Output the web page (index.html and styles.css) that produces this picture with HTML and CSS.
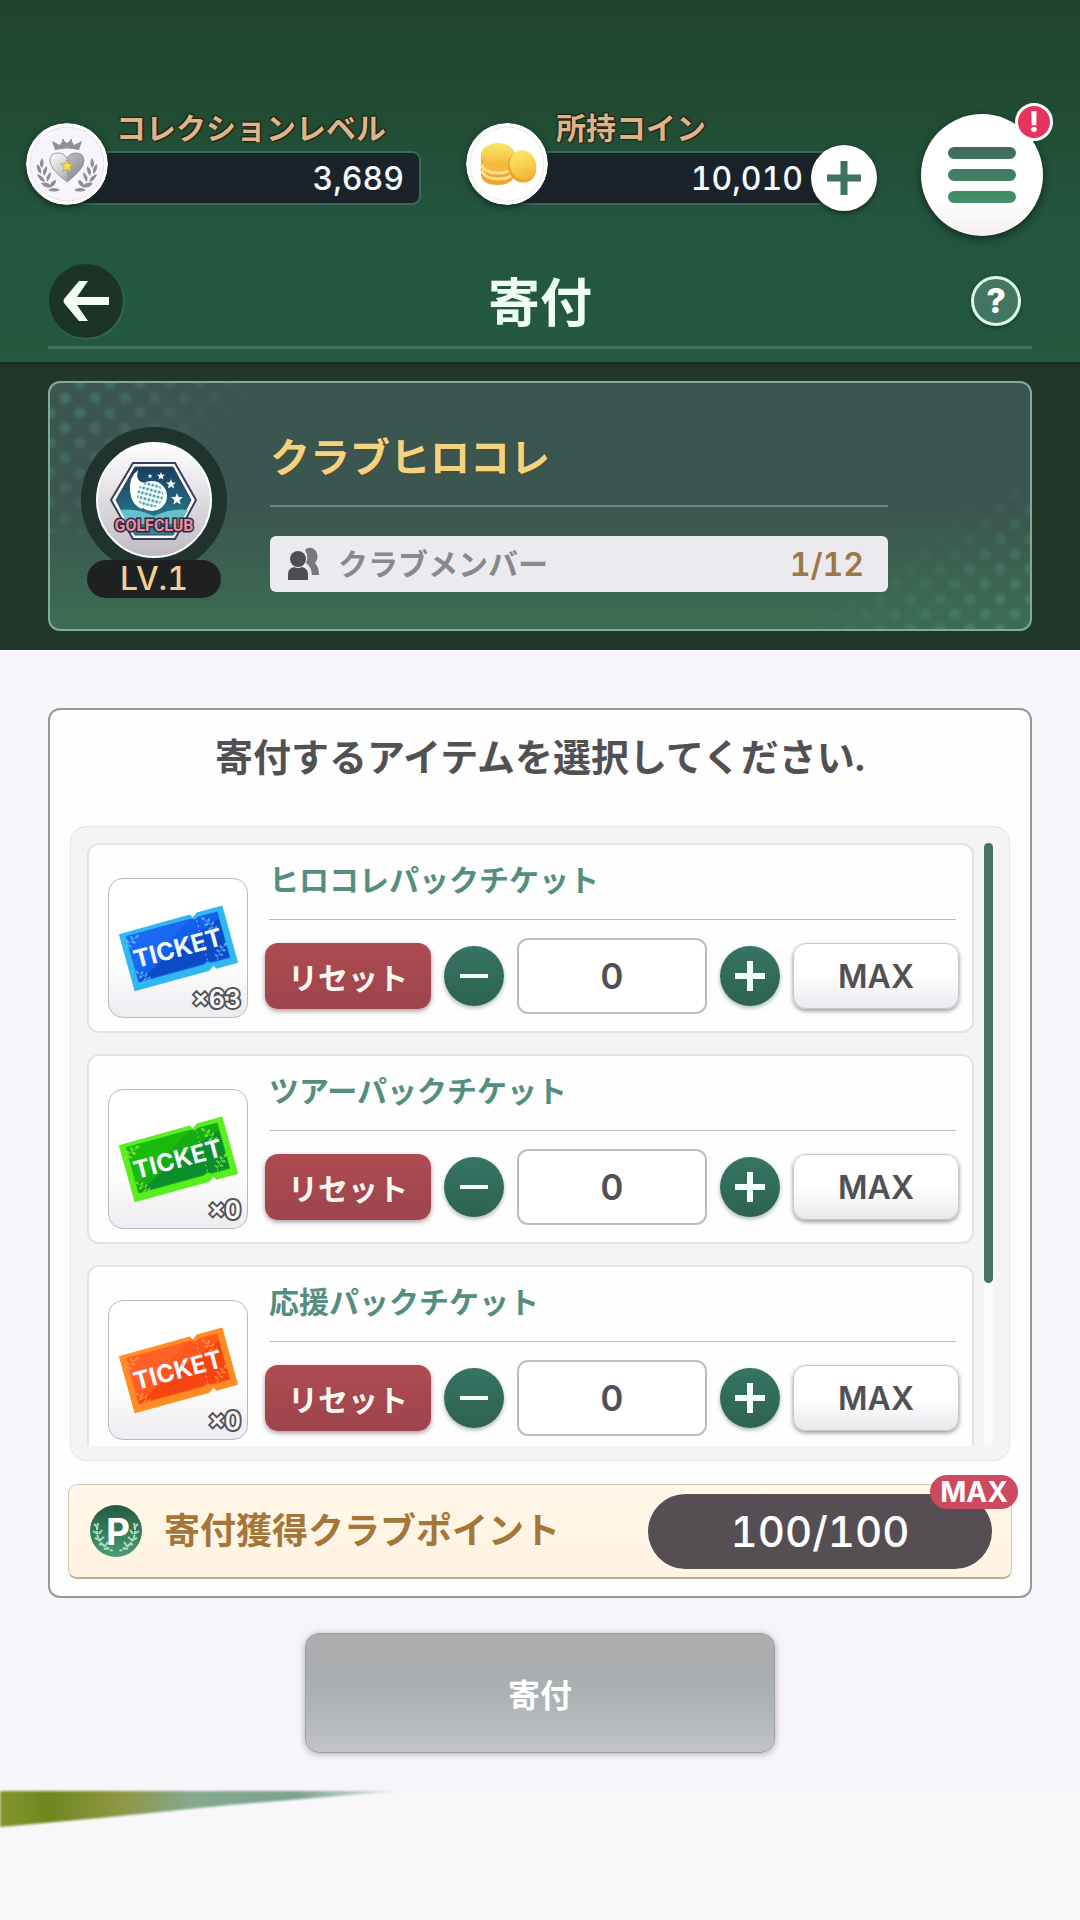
FILE: index.html
```html
<!DOCTYPE html>
<html lang="ja">
<head>
<meta charset="utf-8">
<meta name="viewport" content="width=device-width, initial-scale=1">
<title>寄付</title>
<link rel="stylesheet" href="styles.css">
</head>
<body>
<svg class="defs" aria-hidden="true">
  <defs>
    <path id="star" d="M0-5 1.3-1.6 5-1.5 2.1.8 3.1 4.5 0 2.4-3.1 4.5-2.1.8-5-1.5-1.3-1.6Z"/>
    <g id="sprig">
      <path d="M2 22Q3 12 14 3" fill="none" stroke="currentColor"/>
      <path d="M13 4q-1-5 4-5 1 4-4 5M10 7q-5-1-3-5 4 1 3 5M9 9q2 4 6 1-2-4-6-1M6 12q-5-1-4-5 4 1 4 5M5 14q2 4 6 2-2-4-6-2M3 18q-4-1-4-5 4 1 4 5" fill="currentColor"/>
    </g>
    <clipPath id="ticket-face"><path d="m13 58 70-20 4 1 4-3 22-6 15 51-21 6-4-1-4 3-71 20Z"/></clipPath>
    <g id="ticket">
      <path d="m10 56 72-20 3 3 4-5 26-7 16 58-22 6-3-3-4 5-76 21Z" fill="var(--rim)"/>
      <path d="m17 58 66-18 4 1 4-3 19-5 13 47-19 5-4-1-4 3-66 18Z" fill="var(--face)"/>
      <path d="m17 58 66-18-16 16-40 40Z" fill="var(--light)" opacity=".35"/>
      <path d="M30 104 65 73 84 60 111 40l11 39-19 5-4-1-4 3Z" fill="var(--shade)" opacity=".55"/>
      <path d="m89 42 11 41" stroke="#fff" stroke-opacity=".5" stroke-dasharray="2 3"/>
      <g color="var(--leaf)" clip-path="url(#ticket-face)" opacity=".75">
        <use href="#sprig" transform="translate(17 55) rotate(10) scale(.8)"/>
        <use href="#sprig" transform="translate(38 90) scale(-.7 .7) rotate(20)"/>
        <use href="#sprig" transform="translate(107 37) scale(-.8 .8) rotate(10)"/>
        <use href="#sprig" transform="translate(107 66) rotate(-5) scale(.75)"/>
      </g>
      <text x="70" y="79" transform="rotate(-15 70 71)" text-anchor="middle" class="ticket-word">TICKET</text>
    </g>
    <linearGradient id="silver" x2="1" y2="1"><stop offset="0" stop-color="#fff"/><stop offset=".5" stop-color="#c9c9d0"/><stop offset="1" stop-color="#77777f"/></linearGradient>
    <linearGradient id="gold" x2="0" y2="1"><stop offset="0" stop-color="#fbe96a"/><stop offset="1" stop-color="#f5b433"/></linearGradient>
    <linearGradient id="night" x2="0" y2="1"><stop offset="0" stop-color="#163f5e"/><stop offset="1" stop-color="#2f8799"/></linearGradient>
    <linearGradient id="bars" x2="0" y2="1"><stop offset="0" stop-color="#42695a"/><stop offset="1" stop-color="#43916b"/></linearGradient>
    <linearGradient id="pgreen" x2="0" y2="1"><stop offset="0" stop-color="#225a3d"/><stop offset="1" stop-color="#4c9c77"/></linearGradient>
    <linearGradient id="grass"><stop offset="0" stop-color="#84962b"/><stop offset=".12" stop-color="#6f8720"/><stop offset=".3" stop-color="#8e9641"/><stop offset=".48" stop-color="#86a98e"/><stop offset=".75" stop-color="#7ba38f"/><stop offset="1" stop-color="#a9bcae" stop-opacity=".3"/></linearGradient>
  </defs>
</svg>

<header class="header">
  <div class="topbar">
    <section class="stat">
      <svg class="medal" viewBox="0 0 82 82" aria-hidden="true">
        <circle cx="41" cy="41" r="41" fill="#fff"/><circle cx="41" cy="41" r="37" fill="#f8f4fb" stroke="#e5e0ea"/>
        <path d="M26 18l8 4 3-5 4 3 4-3 3 5 8-4-3 9q-12-3-24 0Z" fill="#8f8f98"/>
        <circle cx="37" cy="17" r="1" fill="#888"/><circle cx="45" cy="17" r="1" fill="#888"/>
        <path d="M41 59Q24 46 24 38q0-8 8-8 6 0 9 5 3-5 9-5 8 0 8 8 0 8-17 21Z" fill="url(#silver)" stroke="#9a9aa3"/>
        <path d="M41 35v24q17-13 17-21 0-8-8-8-6 0-9 5Z" fill="#85858f" opacity=".45"/>
        <use href="#star" transform="translate(41 43) scale(1.3)" fill="#f1df59" stroke="#b7a33b" stroke-width=".6"/>
        <g fill="#8d8d98"><path d="M16 35q-4 6 0 10 3-5 0-10M11 41q-1 7 4 10 1-7-4-10M21 43q-6 4-3 10 4-5 3-10M11 51q2 7 8 8-1-6-8-8M25 49q-6 4-4 10 4-4 4-10M15 60q4 6 11 4-4-6-11-4M30 57q-6 1-6 7 6-1 6-7M22 67q6-4 12 0-6 3-12 0"/>
        <path d="M66 35q4 6 0 10-3-5 0-10M71 41q1 7-4 10-1-7 4-10M61 43q6 4 3 10-4-5-3-10M71 51q-2 7-8 8 1-6 8-8M57 49q6 4 4 10-4-4-4-10M67 60q-4 6-11 4 4-6 11-4M52 57q6 1 6 7-6-1-6-7M60 67q-6-4-12 0 6 3 12 0"/></g>
      </svg>
      <div class="stat-body">
        <h2 class="stat-label">コレクションレベル</h2>
        <p class="stat-bar"><span class="stat-value">3,689</span></p>
      </div>
    </section>
    <section class="stat">
      <svg class="medal" viewBox="0 0 82 82" aria-hidden="true">
        <circle cx="41" cy="41" r="41" fill="#fff"/><circle cx="41" cy="41" r="37" fill="#fff" stroke="#e9e6ea"/>
        <path d="M15 34v18q1 10 17 10 12 0 16-8V34Z" fill="#f0a634"/>
        <path d="M15 41q3 9 17 9 12 0 16-7M15 47q4 9 17 9 12 0 16-6" fill="none" stroke="#fbe28a" stroke-width="3"/>
        <ellipse cx="32" cy="32" rx="17" ry="12" fill="url(#gold)"/><path d="M17 34q5 11 17 10 10-1 14-8v5q-6 8-17 7-11 0-14-7Z" fill="#f6bb3c"/>
        <ellipse cx="56" cy="44" rx="14" ry="16" transform="rotate(-20 56 44)" fill="#f0a42e"/><ellipse cx="57" cy="42" rx="13" ry="15" transform="rotate(-20 57 42)" fill="url(#gold)"/>
      </svg>
      <div class="stat-body">
        <h2 class="stat-label">所持コイン</h2>
        <p class="stat-bar stat-bar-add"><span class="stat-value">10,010</span>
          <button class="add-coin" type="button" aria-label="コインを追加"><svg viewBox="0 0 34 34" width="34" height="34"><path d="M17 0v34M0 17h34" stroke="#3c7461" stroke-width="7"/></svg></button></p>
      </div>
    </section>
    <button class="menu" type="button" aria-label="メニュー">
      <svg viewBox="0 0 68 56" width="68" height="56" aria-hidden="true"><path d="M6 0H62a6 6 0 0 1 0 12H6A6 6 0 0 1 6 0ZM6 22H62a6 6 0 0 1 0 12H6A6 6 0 0 1 6 22ZM6 44H62a6 6 0 0 1 0 12H6A6 6 0 0 1 6 44Z" fill="url(#bars)"/></svg>
      <span class="alert">!</span>
    </button>
  </div>
  <div class="titlebar">
    <button class="back" type="button" aria-label="戻る"><svg viewBox="0 0 46 40" width="46" height="40"><path d="M46 16v8H14l11 16h-9L1 22q-1-2 0-4L16 0h9L14 16Z" fill="#f4fff8"/></svg></button>
    <h1 class="title">寄付</h1>
    <button class="help" type="button" aria-label="ヘルプ">?</button>
  </div>
</header>

<section class="club">
  <div class="club-card">
    <div class="crest">
      <svg class="crest-ball" viewBox="0 0 116 116" aria-hidden="true">
        <defs><linearGradient id="ball" x2="0" y2="1"><stop offset="0" stop-color="#fff"/><stop offset="1" stop-color="#bfbac2"/></linearGradient>
        <pattern id="dimple" width="4" height="5" patternUnits="userSpaceOnUse" patternTransform="rotate(15)"><circle cx="2" cy="2" r="1.5" fill="#3b9aab"/></pattern></defs>
        <circle cx="58" cy="58" r="57" fill="url(#ball)" stroke="#fff" stroke-width="2"/>
        <path d="M37 21H79L100 58 79 97H37L15 58Z" fill="#fff" stroke="#34405c" stroke-width="2"/>
        <path d="M39 25H77L95 58 77 93H39L20 58Z" fill="url(#night)" stroke="#34405c"/>
        <path d="M24 68q16-2 34 6 18-8 34-6l-8 14H32Z" fill="#63c0cc"/>
        <path d="M42 28q-9 7-8 20 1 15 12 19L56 40q-18 4-14-12Z" fill="#fff"/>
        <circle cx="56" cy="54" r="15" fill="#fff"/><circle cx="54" cy="53" r="13" fill="url(#dimple)"/>
        <g fill="#fff"><use href="#star" transform="translate(54 34) scale(.5)"/><use href="#star" transform="translate(65 34) scale(.8)"/><use href="#star" transform="translate(75 42)"/><use href="#star" transform="translate(81 57) scale(1.2)"/></g>
        <text x="58" y="89" text-anchor="middle" class="crest-word">GOLFCLUB</text>
      </svg>
      <span class="level">LV.1</span>
    </div>
    <div class="club-info">
      <h2 class="club-name">クラブヒロコレ</h2>
      <p class="members">
        <svg viewBox="0 0 32 34" width="32" height="34" aria-hidden="true"><path d="M17 3a7 8 0 1 1 10 13q4 4 4 12h-7q-1-9-6-12 3-6-1-13Z" fill="#7b787d"/><circle cx="10" cy="12" r="8" fill="#504d52"/><path d="M0 33v-5q0-7 6-8 4 2 8 0 6 1 6 8v5Z" fill="#504d52"/></svg>
        <span class="members-label">クラブメンバー</span><span class="members-count">1/12</span>
      </p>
    </div>
  </div>
</section>

<main class="page">
  <form class="panel" id="donation">
    <h2 class="panel-title">寄付するアイテムを選択してください.</h2>
    <div class="list">
      <ul class="items">
        <li class="item">
          <div class="thumb blue"><svg viewBox="0 0 140 140" aria-hidden="true"><use href="#ticket"/></svg><span class="count">×63</span></div>
          <div class="item-body">
            <label class="item-name" for="qty1">ヒロコレパックチケット</label>
            <div class="controls">
              <button class="btn reset" type="button">リセット</button>
              <button class="step" type="button" aria-label="減らす"><svg viewBox="0 0 30 30"><path d="M1 15h28" stroke-width="4"/></svg></button>
              <input class="qty" id="qty1" type="text" inputmode="numeric" value="0">
              <button class="step" type="button" aria-label="増やす"><svg viewBox="0 0 30 30"><path d="M15 0v30M0 15h30" stroke-width="6"/></svg></button>
              <button class="btn max" type="button">MAX</button>
            </div>
          </div>
        </li>
        <li class="item">
          <div class="thumb green"><svg viewBox="0 0 140 140" aria-hidden="true"><use href="#ticket"/></svg><span class="count">×0</span></div>
          <div class="item-body">
            <label class="item-name" for="qty2">ツアーパックチケット</label>
            <div class="controls">
              <button class="btn reset" type="button">リセット</button>
              <button class="step" type="button" aria-label="減らす"><svg viewBox="0 0 30 30"><path d="M1 15h28" stroke-width="4"/></svg></button>
              <input class="qty" id="qty2" type="text" inputmode="numeric" value="0">
              <button class="step" type="button" aria-label="増やす"><svg viewBox="0 0 30 30"><path d="M15 0v30M0 15h30" stroke-width="6"/></svg></button>
              <button class="btn max" type="button">MAX</button>
            </div>
          </div>
        </li>
        <li class="item">
          <div class="thumb orange"><svg viewBox="0 0 140 140" aria-hidden="true"><use href="#ticket"/></svg><span class="count">×0</span></div>
          <div class="item-body">
            <label class="item-name" for="qty3">応援パックチケット</label>
            <div class="controls">
              <button class="btn reset" type="button">リセット</button>
              <button class="step" type="button" aria-label="減らす"><svg viewBox="0 0 30 30"><path d="M1 15h28" stroke-width="4"/></svg></button>
              <input class="qty" id="qty3" type="text" inputmode="numeric" value="0">
              <button class="step" type="button" aria-label="増やす"><svg viewBox="0 0 30 30"><path d="M15 0v30M0 15h30" stroke-width="6"/></svg></button>
              <button class="btn max" type="button">MAX</button>
            </div>
          </div>
        </li>
      </ul>
      <div class="scrollbar" aria-hidden="true"><div class="scroll-thumb"></div></div>
    </div>
    <div class="points">
      <svg viewBox="0 0 52 52" width="52" height="52" aria-hidden="true"><circle cx="26" cy="26" r="26" fill="url(#pgreen)"/>
        <g fill="none" stroke="#a9dcc0" stroke-width="2"><path d="M8 18Q3 38 23 46M44 18q5 20-15 28" stroke-dasharray="3 1"/><path d="M4 19l4 4M3 26l5 3M5 33l5 2M9 39l5 1M14 44l5-1M12 25l-3 4M14 32l-4 3M18 37l-3 4M48 19l-4 4M49 26l-5 3M47 33l-5 2M43 39l-5 1M38 44l-5-1M40 25l3 4M38 32l4 3M34 37l3 4"/></g>
        <text x="28" y="40" text-anchor="middle" class="p-mark">P</text></svg>
      <span class="points-label">寄付獲得クラブポイント</span>
      <span class="points-value">100/100<span class="max-badge">MAX</span></span>
    </div>
  </form>
  <button class="donate" type="submit" form="donation" disabled>寄付</button>
</main>
<svg class="grass" viewBox="0 0 400 40" aria-hidden="true"><path d="M0 0H400L230 14 100 27 0 36Z" fill="url(#grass)"/></svg>
</body>
</html>
```
FILE: styles.css
```css
* { box-sizing: border-box; }

body {
  margin: 0;
  min-height: 100vh;
  background: #f8f7fa;
  color: #535054;
  font-family: "Inter", "Noto Sans CJK JP", sans-serif;
  font-weight: 600;
  font-variant-numeric: tabular-nums;
}

h1, h2, p, ul { margin: 0; padding: 0; }
button, input { font: inherit; font-variant-numeric: tabular-nums; padding: 0; border: 0; }
svg { display: block; flex: none; }
.defs { position: absolute; width: 0; height: 0; }

/* Header */
.header {
  padding: 110px 48px 13px;
  background: linear-gradient(#20452f 0, #21492f 80px, #235540 220px, #24593f 100%);
}
.topbar {
  display: grid;
  grid-template-columns: 393fr 412fr 122px;
  gap: 46px;
  align-items: start;
  margin: 0 -11px 0 -22px;
}
.stat { display: flex; align-items: flex-end; }
.medal {
  width: 82px;
  height: 82px;
  z-index: 1;
  border-radius: 50%;
  box-shadow: 0 2px 6px #12291c;
}
.stat-body { flex: 1; margin-left: -32px; }
.stat:first-child { margin-right: -3px; }
.stat:nth-child(2) { margin-left: 2px; margin-right: -2px; }
.stat-label {
  padding: 0 0 5px 40px;
  font-size: 30px;
  font-weight: 700;
  line-height: 36px;
  color: #dab68c;
  white-space: nowrap;
  text-shadow: 1px 1px 1px #2c1c0c, -1px -1px 1px #2c1c0c, 1px -1px 1px #2c1c0c;
}
.stat-bar {
  display: flex;
  align-items: center;
  justify-content: flex-end;
  height: 54px;
  padding-right: 15px;
  border: 2px solid #3f6858;
  border-radius: 9px;
  background: #1a2329;
}
.stat-bar-add { margin-right: 32px; padding: 0; }
.stat-value { font-size: 32px; font-weight: 500; color: #f5faff; }
.add-coin {
  display: grid;
  place-items: center;
  flex: none;
  width: 66px;
  height: 66px;
  margin: 0 -34px 0 8px;
  border-radius: 50%;
  background: #fff;
  box-shadow: 0 2px 5px #12291c;
}
.menu {
  position: relative;
  display: grid;
  place-items: center;
  width: 122px;
  height: 122px;
  margin-top: 4px;
  border-radius: 50%;
  background: linear-gradient(#fff 70%, #f2eff3);
  box-shadow: 0 3px 8px #12291c;
}
.alert {
  position: absolute;
  top: -11px;
  right: -10px;
  width: 38px;
  height: 38px;
  border: 3px solid #fff;
  border-radius: 50%;
  background: #e5355f;
  color: #fff;
  font-size: 28px;
  font-weight: 800;
  line-height: 32px;
}
.titlebar {
  display: grid;
  grid-template-columns: 1fr auto 1fr;
  align-items: center;
  padding: 28px 0 8px;
  border-bottom: 3px solid #41705f;
}
.back {
  display: grid;
  place-items: center;
  width: 74px;
  height: 74px;
  margin-left: 1px;
  border-radius: 50%;
  background: #1c3328;
  box-shadow: 1px 1px 2px #3d7059;
}
.title {
  padding-top: 6px;
  font-size: 52px;
  font-weight: 700;
  line-height: 64px;
  color: #f0fff6;
}
.help {
  justify-self: end;
  width: 50px;
  height: 50px;
  margin-right: 11px;
  border: 3px solid #dcfbec;
  border-radius: 50%;
  background: #437662;
  color: #fff;
  font-size: 34px;
  font-weight: 800;
  line-height: 44px;
  box-shadow: 0 2px 4px #183b2a;
}

/* Club card */
.club {
  padding: 19px 48px;
  background: linear-gradient(#162e23 0, #22362a 8px, #20382b 100%);
}
.club-card {
  position: relative;
  display: grid;
  grid-template-columns: 146px 618px;
  gap: 43px;
  padding: 29px 31px 37px;
  border: 2px solid #83aa97;
  border-radius: 12px;
  overflow: hidden;
  background: linear-gradient(#3b5550 50%, #3b6b53 95%);
}
.club-card::before,
.club-card::after {
  content: "";
  position: absolute;
  width: 300px;
  height: 150px;
  background:
    radial-gradient(circle, #4d8a75 3px, transparent 8px) 0 0 / 30px 30px,
    radial-gradient(circle, #4d8a75 3px, transparent 8px) 15px 15px / 30px 30px;
}
.club-card::before {
  top: 0;
  left: 0;
  opacity: .5;
  mask-image: linear-gradient(135deg, #000 10%, transparent 50%);
}
.club-card::after {
  right: 0;
  bottom: 0;
  opacity: .6;
  mask-image: linear-gradient(325deg, #000 10%, transparent 48%);
}
.crest {
  position: relative;
  z-index: 1;
  display: grid;
  place-items: center;
  width: 146px;
  height: 146px;
  margin-top: 15px;
  border-radius: 50%;
  background: #20332e;
}
.crest-ball { width: 116px; height: 116px; }
.crest-word {
  font: 700 16px "Roboto", sans-serif;
  fill: #e7909d;
  stroke: #2d2947;
  stroke-width: 3px;
  paint-order: stroke;
}
.level {
  position: absolute;
  left: 6px;
  bottom: -25px;
  width: 134px;
  height: 38px;
  border-radius: 19px;
  background: #1f2022;
  color: #f0cf8f;
  font-size: 32px;
  font-weight: 500;
  line-height: 38px;
  text-align: center;
}
.club-info { position: relative; z-index: 1; }
.club-name {
  height: 95px;
  padding-top: 18px;
  border-bottom: 2px solid #6c8780;
  color: #f3d382;
  font-size: 40px;
  font-weight: 700;
  line-height: 56px;
  text-shadow: 0 1px 2px #5c4a20;
}
.members {
  display: flex;
  align-items: center;
  gap: 18px;
  height: 56px;
  margin-top: 29px;
  padding: 0 24px 0 18px;
  border-radius: 6px;
  background: #ebeaee;
}
.members-label { font-size: 30px; font-weight: 700; line-height: 36px; color: #8a888c; }
.members-count { margin-left: auto; font-size: 32px; color: #9b7848; }

/* Donation panel */
.page { padding: 58px 48px 38px; background: #f7f5f9; }
.panel {
  padding: 20px 18px 17px;
  border: 2px solid #98969b;
  border-radius: 12px;
  background: #fefeff;
}
.panel-title {
  margin-bottom: 40px;
  padding-bottom: 2px;
  font-size: 38px;
  font-weight: 700;
  line-height: 54px;
  text-align: center;
}
.list {
  display: flex;
  gap: 10px;
  margin: 0 2px;
  padding: 16px 16px 14px;
  border: 1px solid #e6e4e8;
  border-radius: 16px;
  background: #f4f3f6;
}
.items {
  flex: 1;
  display: flex;
  flex-direction: column;
  gap: 21px;
  max-height: 603px;
  overflow: hidden;
  list-style: none;
}
.item {
  display: flex;
  flex: none;
  gap: 17px;
  height: 190px;
  padding: 0 13px 0 19px;
  border: 2px solid #e4e2e6;
  border-radius: 12px;
  background: #fefeff;
}
.thumb {
  position: relative;
  flex: none;
  width: 140px;
  height: 140px;
  margin-top: 33px;
  border: 1px solid #b9b7bc;
  border-radius: 15px;
  background: linear-gradient(#fff 60%, #ececf1);
}
.ticket-word { font: 700 25px "Inter", sans-serif; fill: #f4f9ff; }
.blue { --rim: #31b8f3; --face: #1460ee; --light: #2677ff; --shade: #0738aa; --leaf: #64c7f8; }
.green { --rim: #59ee20; --face: #16ad13; --light: #24d606; --shade: #087443; --leaf: #8bf342; }
.orange { --rim: #ff8c24; --face: #ff571d; --light: #ff7440; --shade: #ee3708; --leaf: #ffa044; }
.count {
  position: absolute;
  right: 6px;
  bottom: 4px;
  font-size: 25px;
  line-height: 28px;
  color: #fff;
  -webkit-text-stroke: 4px #555357;
  paint-order: stroke;
}
.item-body { flex: 1; }
.item-name {
  display: block;
  margin: 0 3px 0 4px;
  height: 75px;
  padding-top: 14px;
  border-bottom: 1px solid #bcbabf;
  color: #548e7f;
  font-size: 30px;
  font-weight: 700;
  line-height: 42px;
}
.controls {
  display: flex;
  align-items: center;
  justify-content: space-between;
  height: 76px;
  margin-top: 18px;
}
.btn {
  width: 166px;
  height: 66px;
  border-radius: 13px;
  font-size: 32px;
}
.reset {
  background: linear-gradient(#ae4b51, #9d444c);
  color: #fff8f2;
  font-size: 30px;
  font-weight: 700;
  box-shadow: 0 2px 5px #a99;
}
.max {
  border: 1px solid #c9c6cb;
  background: linear-gradient(#fff 50%, #ebe8ed);
  color: #535054;
  box-shadow: 0 2px 4px #99969b;
}
.step {
  display: grid;
  place-items: center;
  width: 60px;
  height: 60px;
  border-radius: 50%;
  background: linear-gradient(#367463, #2e6252);
  box-shadow: 0 2px 4px #aab5b0;
}
.step svg { width: 30px; height: 30px; stroke: #f4fffa; }
.qty {
  width: 190px;
  height: 76px;
  border: 2px solid #bebcc0;
  border-radius: 11px;
  background: #fff;
  color: #535054;
  font-size: 36px;
  text-align: center;
}
.scrollbar { width: 9px; border-radius: 5px; background: #fbfafc; }
.scroll-thumb { height: 73%; border-radius: 5px; background: #45735f; }

.points {
  display: flex;
  align-items: center;
  gap: 22px;
  height: 95px;
  margin-top: 23px;
  padding: 0 19px 0 21px;
  border: 1px solid #cfc8bd;
  border-bottom: 2px solid #b8aa98;
  border-radius: 9px;
  background: linear-gradient(#fff7e8, #fff3e2);
}
.p-mark { font: 700 37px "Inter", sans-serif; fill: #fff; }
.points-label { font-size: 36px; font-weight: 700; line-height: 42px; color: #a57638; }
.points-value {
  position: relative;
  width: 344px;
  height: 75px;
  margin-left: auto;
  border-radius: 38px;
  background: #554f53;
  color: #fff;
  font-size: 42px;
  font-weight: 500;
  line-height: 75px;
  text-align: center;
}
.max-badge {
  position: absolute;
  top: -19px;
  right: -26px;
  width: 88px;
  height: 34px;
  border-radius: 17px;
  background: #cb4a60;
  font-size: 28px;
  font-weight: 700;
  line-height: 34px;
}
.donate {
  display: block;
  width: 470px;
  height: 120px;
  margin: 35px auto 0;
  border: 1px solid #9da0a2;
  border-radius: 14px;
  background: linear-gradient(#adabae, #aab0b2 50%, #c2c3c5);
  color: #fff;
  font-size: 32px;
  font-weight: 700;
  box-shadow: 0 1px 6px #aaa8ad;
}
.grass { width: 37%; filter: blur(1px); }
```
